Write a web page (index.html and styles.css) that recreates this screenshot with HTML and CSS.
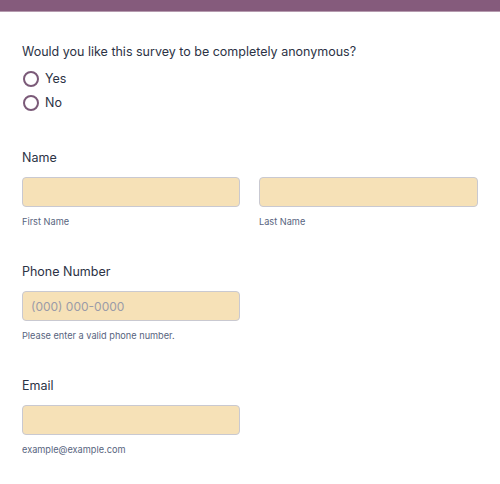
FILE: index.html
```html
<!DOCTYPE html>
<html>
<head>
<meta charset="utf-8">
<link rel="stylesheet" href="styles.css">
</head>
<body>
<div class="topbar"></div>
<form class="form">
  <div class="field first">
    <div class="question">Would you like this survey to be completely anonymous?</div>
    <div class="options">
      <label class="option"><span class="radio"></span><span>Yes</span></label>
      <label class="option"><span class="radio"></span><span>No</span></label>
    </div>
  </div>
  <div class="field">
    <div class="label">Name</div>
    <div class="row">
      <div class="col">
        <div class="input"></div>
        <div class="sub">First Name</div>
      </div>
      <div class="col">
        <div class="input"></div>
        <div class="sub">Last Name</div>
      </div>
    </div>
  </div>
  <div class="field">
    <div class="label">Phone Number</div>
    <div class="col single">
      <div class="input"><span class="ph">(000) 000-0000</span></div>
      <div class="sub">Please enter a valid phone number.</div>
    </div>
  </div>
  <div class="field">
    <div class="label">Email</div>
    <div class="col single">
      <div class="input"></div>
      <div class="sub">example@example.com</div>
    </div>
  </div>
</form>
</body>
</html>
```
FILE: styles.css
```css
html, body {
  margin: 0;
  padding: 0;
  background: #ffffff;
  font-family: Inter, "Noto Sans", sans-serif;
  color: #2c3345;
}
.topbar {
  height: 12px;
  background: #855b7c;
  border-bottom: 1px solid #b59aae;
  box-sizing: border-box;
}
.form {
  padding: 32px 22px 0 22px;
  display: flex;
  flex-direction: column;
}
.field {
  margin-bottom: 36px;
}
.field.first {
  margin-bottom: 39px;
}
.question {
  font-size: 12.5px;
  line-height: 16px;
  margin-bottom: 11px;
}
.options {
  display: flex;
  flex-direction: column;
  gap: 8px;
}
.option {
  display: flex;
  align-items: center;
  gap: 6px;
  font-size: 12.5px;
  line-height: 16px;
}
.radio {
  width: 16px;
  height: 16px;
  border: 2px solid #7b5a78;
  border-radius: 50%;
  box-sizing: border-box;
  margin-left: 1px;
}
.label {
  font-size: 12.5px;
  line-height: 16px;
  margin-bottom: 11px;
}
.row {
  display: grid;
  grid-template-columns: 218px 219px;
  column-gap: 19px;
}
.single {
  width: 218px;
}
.input {
  height: 30px;
  background: #f6e1b7;
  border: 1px solid #c9c9d1;
  border-radius: 4px;
  box-sizing: border-box;
  display: flex;
  align-items: center;
  padding-left: 8px;
}
.ph {
  color: #9a9ba8;
  font-size: 12px;
}
.sub {
  font-size: 9.2px;
  line-height: 12px;
  margin-top: 9px;
  color: #57647e;
}
```
